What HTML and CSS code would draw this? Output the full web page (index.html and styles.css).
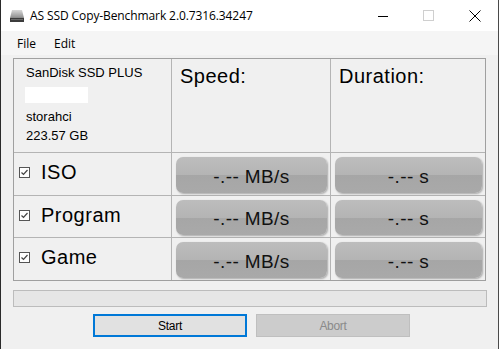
FILE: index.html
```html
<!DOCTYPE html>
<html>
    <head>
        <meta charset="UTF-8">
        <title>AS SSD Copy-Benchmark</title>
        <link rel="stylesheet" href="styles.css">
    </head>
    <body>
        <div class="window">
            <div class="titlebar">
                <svg class="appicon" width="16" height="14" viewBox="0 0 16 14">
                    <defs>
                        <linearGradient id="drv" x1="0" y1="0" x2="0" y2="1">
                            <stop offset="0" stop-color="#d8d8d8"/>
                            <stop offset="0.55" stop-color="#9a9a9a"/>
                            <stop offset="1" stop-color="#4a4a4a"/>
                        </linearGradient>
                    </defs>
                    <path d="M3 1 H13 L15 9 V13 H1 V9 Z" fill="url(#drv)"/>
                    <rect x="1" y="9" width="14" height="4" fill="#3c3c3c"/>
                    <rect x="2" y="10" width="12" height="1" fill="#6a6a6a"/>
                </svg>
                <span class="title">AS SSD Copy-Benchmark 2.0.7316.34247</span>
                <div class="controls">
                    <svg width="46" height="30" viewBox="0 0 46 30"><path d="M18 15.5 H28" stroke="#000" stroke-width="1"/></svg>
                    <svg width="46" height="30" viewBox="0 0 46 30"><rect x="17.5" y="9.5" width="10" height="10" fill="none" stroke="#cfcfcf" stroke-width="1"/></svg>
                    <svg width="46" height="30" viewBox="0 0 46 30"><path d="M17.5 9.5 L28.5 20.5 M28.5 9.5 L17.5 20.5" stroke="#000" stroke-width="1"/></svg>
                </div>
            </div>
            <div class="menubar">
                <span class="menuitem">File</span>
                <span class="menuitem">Edit</span>
            </div>
            <div class="content">
                <div class="bench">
                    <div class="cell drive">
                        <div class="line">SanDisk SSD PLUS</div>
                        <div class="serial"></div>
                        <div class="line">storahci</div>
                        <div class="line">223.57 GB</div>
                    </div>
                    <div class="cell head">Speed:</div>
                    <div class="cell head">Duration:</div>

                    <div class="cell label"><svg class="check" width="11" height="11" viewBox="0 0 11 11"><rect x="0.5" y="0.5" width="10" height="10" fill="#fff" stroke="#555"/><path d="M2.5 5.5 L4.5 7.5 L8.5 3" fill="none" stroke="#444" stroke-width="1.2"/></svg>ISO</div>
                    <div class="cell result"><div class="pill">-.-- MB/s</div></div>
                    <div class="cell result"><div class="pill">-.-- s</div></div>

                    <div class="cell label"><svg class="check" width="11" height="11" viewBox="0 0 11 11"><rect x="0.5" y="0.5" width="10" height="10" fill="#fff" stroke="#555"/><path d="M2.5 5.5 L4.5 7.5 L8.5 3" fill="none" stroke="#444" stroke-width="1.2"/></svg>Program</div>
                    <div class="cell result"><div class="pill">-.-- MB/s</div></div>
                    <div class="cell result"><div class="pill">-.-- s</div></div>

                    <div class="cell label"><svg class="check" width="11" height="11" viewBox="0 0 11 11"><rect x="0.5" y="0.5" width="10" height="10" fill="#fff" stroke="#555"/><path d="M2.5 5.5 L4.5 7.5 L8.5 3" fill="none" stroke="#444" stroke-width="1.2"/></svg>Game</div>
                    <div class="cell result"><div class="pill">-.-- MB/s</div></div>
                    <div class="cell result"><div class="pill">-.-- s</div></div>
                </div>
                <div class="progress"></div>
                <div class="actions">
                    <button class="btn start">Start</button>
                    <button class="btn abort" disabled>Abort</button>
                </div>
            </div>
        </div>
    </body>
</html>
```

FILE: styles.css
```css
body{
    margin: 0;
    background: #f0f0f0;
    font-family: "Liberation Sans", Arial, sans-serif;
}
.window{
    width: 497px;
    height: 349px;
    border-left: 1px solid #2a2a2a;
    border-right: 1px solid #4a4a4a;
    background: #f0f0f0;
    overflow: hidden;
}
.titlebar{
    height: 31px;
    background: #ffffff;
    display: flex;
    align-items: center;
}
.appicon{
    margin: 0 5px 0 8px;
}
.title{
    font-family: "Open Sans", sans-serif;
    font-size: 12px;
    color: #000;
    letter-spacing: -0.1px;
}
.controls{
    margin-left: auto;
    display: flex;
    align-items: center;
    height: 30px;
}
.menubar{
    height: 24px;
    background: #f5f5f5;
    display: flex;
    align-items: center;
    padding-left: 9px;
    font-family: "Open Sans", sans-serif;
    font-size: 12px;
}
.menuitem{
    padding: 0 7px;
    margin-right: 4px;
}
.content{
    padding: 3px 0 0 12px;
}
.bench{
    display: grid;
    grid-template-columns: 157px 158px 154px;
    grid-template-rows: 93px 42px 41px 42px;
    gap: 1px;
    width: 471px;
    border: 1px solid #a0a0a0;
    background: #b4b4b4;
}
.cell{
    background: #f0f0f0;
}
.drive{
    padding: 4px 0 0 12px;
    font-size: 13px;
    color: #000;
}
.drive .line{
    line-height: 19px;
}
.serial{
    width: 63px;
    height: 16px;
    background: #ffffff;
    margin: 5px 0 4px -1px;
}
.head{
    font-size: 20px;
    line-height: 24px;
    padding: 5px 0 0 8px;
    letter-spacing: 0.5px;
}
.label{
    display: flex;
    align-items: center;
    font-size: 20px;
    padding: 0 0 3px 5px;
    letter-spacing: 0.5px;
}
.check{
    margin-right: 11px;
}
.result{
    padding: 4px 3px 2px 4px;
    display: flex;
}
.pill{
    flex: 1;
    display: flex;
    align-items: center;
    justify-content: center;
    border-radius: 7px;
    background: linear-gradient(#bdbdbd 0%, #b4b4b4 50%, #a6a6a6 50%, #a9a9a9 100%);
    box-shadow: 1px 1px 2px rgba(0,0,0,0.3);
    font-size: 19px;
    color: #111;
    letter-spacing: 0.4px;
    padding-top: 3px;
}
.progress{
    width: 472px;
    height: 15px;
    margin-top: 9px;
    border: 1px solid #bcbcbc;
    background: #e6e6e6;
}
.actions{
    display: flex;
    gap: 9px;
    margin-top: 7px;
    padding-left: 80px;
}
.btn{
    width: 154px;
    height: 23px;
    font-family: "Liberation Sans", Arial, sans-serif;
    font-size: 12px;
    letter-spacing: -0.3px;
    margin: 0;
    padding: 0;
}
.start{
    background: #e1e1e1;
    border: 2px solid #0078d7;
    color: #000;
}
.abort{
    background: #cccccc;
    border: 1px solid #bfbfbf;
    color: #8a8a8a;
}
```
